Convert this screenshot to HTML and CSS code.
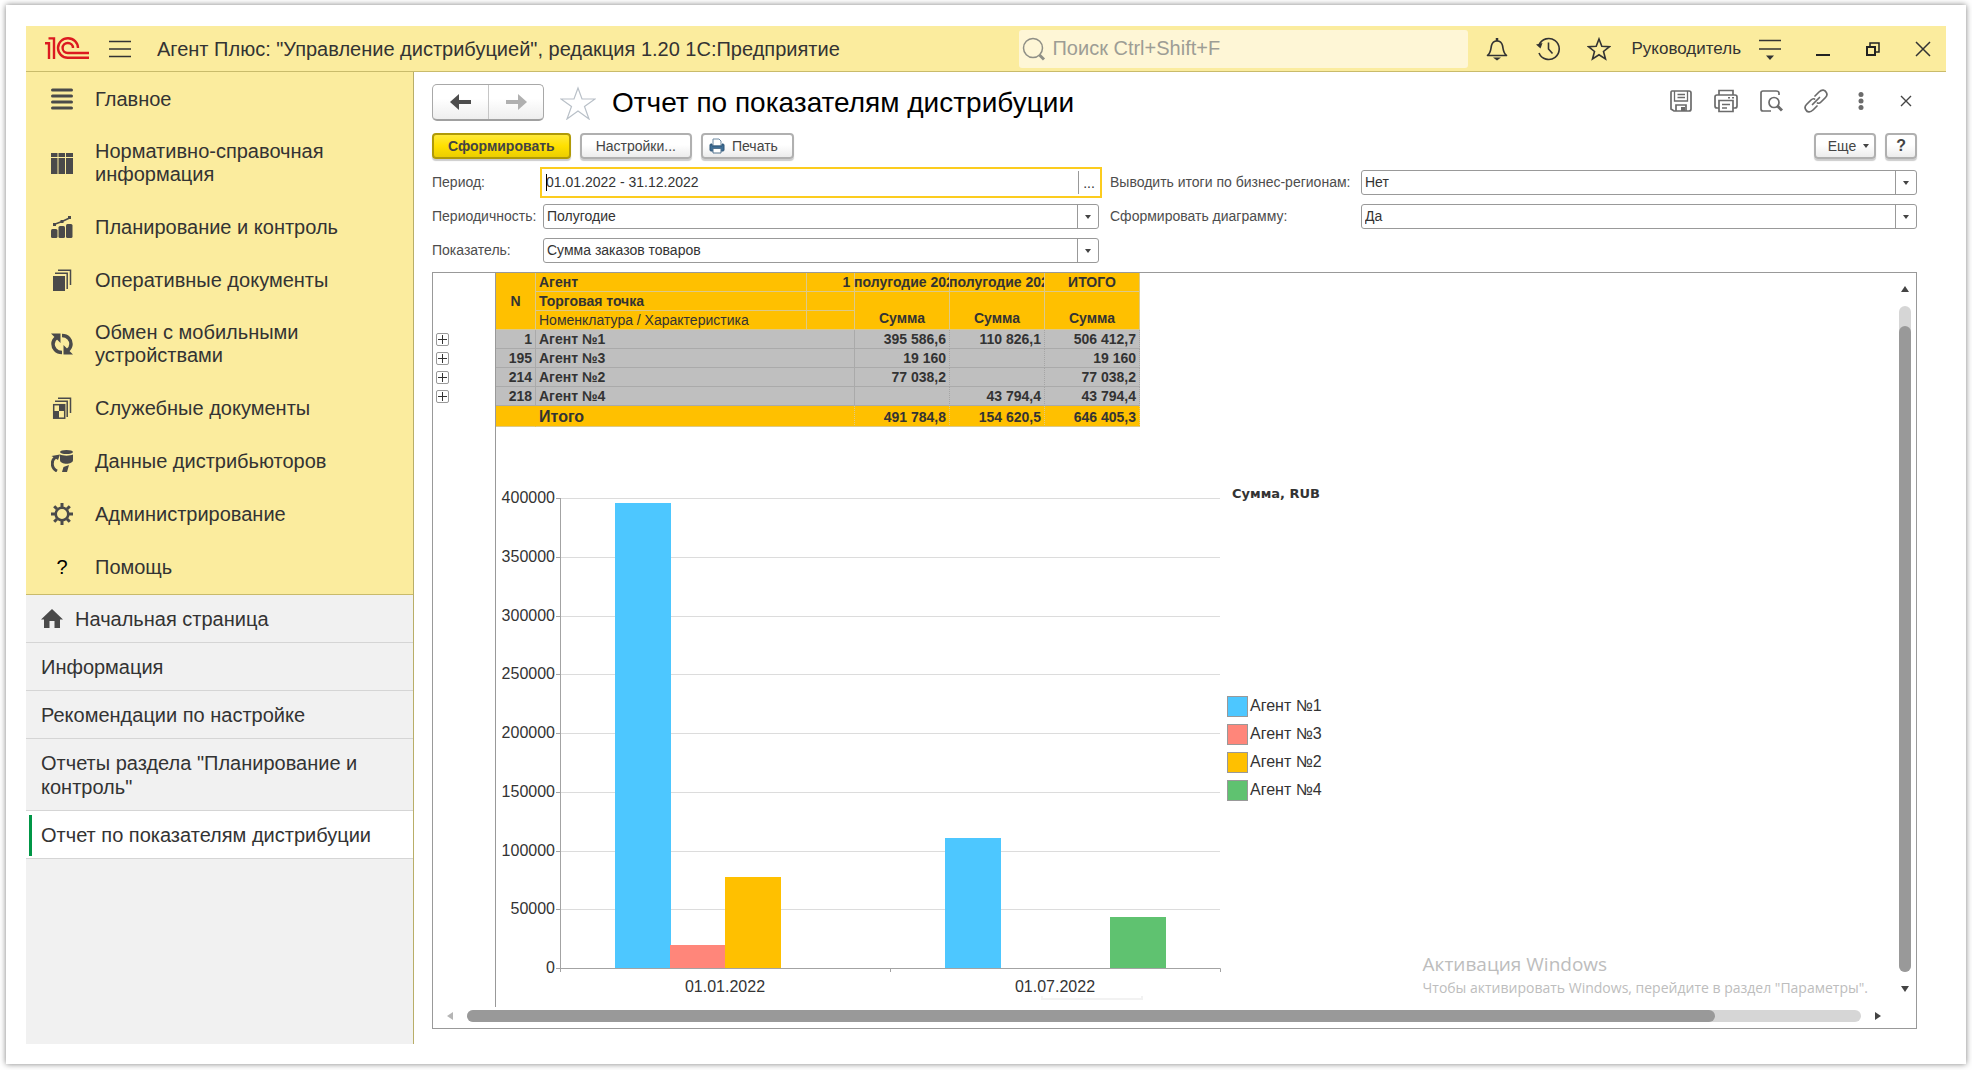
FILE: index.html
```html
<!DOCTYPE html>
<html lang="ru">

<head>
    <meta charset="UTF-8">
    <meta name="viewport" content="width=device-width, initial-scale=1.0">
    <title>Отчет по показателям дистрибуции</title>
    <link rel="stylesheet" href="styles.css">
</head>

<body>
    <div class="window">
        <header class="topbar">
            <svg class="logo" width="44" height="23" viewBox="0 0 44 23" fill="none" stroke="#dc1a20" stroke-width="2.4">
                <path d="M0 6.2H4V22M3.5 1.4H9V22" />
                <path d="M33 11A10 9.800 0 1 0 22.800 20.800H44" />
                <path d="M28 11A5.200 5 0 1 0 22.800 16H44" />
            </svg>
            <button class="icon-btn burger" aria-label="Меню">
                <svg width="22" height="20" viewBox="0 0 22 20" stroke="#333" stroke-width="1.500">
                    <path d="M0 2.500H22M0 10H22M0 17.500H22" />
                </svg>
            </button>
            <div class="app-name">Агент Плюс: "Управление дистрибуцией", редакция 1.20 1С:Предприятие</div>
            <label class="search">
                <svg width="24" height="24" viewBox="0 0 24 24" fill="none" stroke="#8f8f86">
                    <circle cx="11" cy="11" r="9.500" stroke-width="1.500" />
                    <path d="M17.500 18L22 22.500" stroke-width="3" />
                </svg>
                <input type="search" placeholder="Поиск Ctrl+Shift+F" aria-label="Поиск">
            </label>
            <div class="tools">
                <button class="icon-btn" aria-label="Уведомления">
                    <svg width="24" height="24" viewBox="0 0 24 24" fill="none" stroke="#333" stroke-width="1.600">
                        <path d="M2.500 18.500C6 16 5.500 13 6.500 8.500C7.200 5.500 9 4 12 4S16.800 5.500 17.500 8.500C18.500 13 18 16 21.500 18.500Z" stroke-linejoin="round" />
                        <path d="M12 1V4" stroke-width="2.500" />
                        <path d="M8 20.500H16L12 23.500Z" fill="#333" stroke="none" />
                    </svg>
                </button>
                <button class="icon-btn" aria-label="История">
                    <svg width="24" height="24" viewBox="0 0 24 24" fill="none" stroke="#333" stroke-width="1.600">
                        <path d="M3 8A10.500 10.500 0 1 1 3 16" />
                        <path d="M12.500 5.500V12L16.500 16.500" />
                        <path d="M0 7.500L6.500 6L4.500 11.500Z" fill="#333" stroke="none" />
                    </svg>
                </button>
                <button class="icon-btn" aria-label="Избранное">
                    <svg width="24" height="24" viewBox="0 0 24 24" fill="none" stroke="#333" stroke-width="1.600">
                        <path d="M12 2L14.800 9.200L22.500 9.600L16.500 14.500L18.500 22L12 17.800L5.500 22L7.500 14.500L1.500 9.600L9.200 9.200Z" />
                    </svg>
                </button>
            </div>
            <a href="#" class="user">Руководитель</a>
            <button class="icon-btn more-menu" aria-label="Сервис">
                <svg width="22" height="22" viewBox="0 0 22 22" stroke="#333" stroke-width="1.600">
                    <path d="M0 2.500H22M0 11H22" />
                    <path d="M7 17.500H15L11 22Z" fill="#333" stroke="none" />
                </svg>
            </button>
            <div class="window-buttons">
                <button class="icon-btn" aria-label="Свернуть">
                    <svg width="16" height="16" viewBox="0 0 16 16"><path d="M1 13H15V15H1Z" fill="#222" /></svg>
                </button>
                <button class="icon-btn" aria-label="Восстановить">
                    <svg width="16" height="16" viewBox="0 0 16 16" fill="none" stroke="#222" stroke-width="2">
                        <path d="M2 6H10V14H2Z" />
                        <path d="M5 5V2H14V11H11" stroke-width="1.500" />
                    </svg>
                </button>
                <button class="icon-btn" aria-label="Закрыть">
                    <svg width="16" height="16" viewBox="0 0 16 16" stroke="#333" stroke-width="1.500"><path d="M1 1L15 15M15 1L1 15" /></svg>
                </button>
            </div>
        </header>

        <div class="body">
            <aside class="sidebar">
                <nav class="sections">
                    <a href="#">
                        <svg width="22" height="22" viewBox="0 0 22 22" stroke="#4a4a4a" stroke-width="3" stroke-linecap="round">
                            <path d="M1.500 2H20.500M1.500 8H20.500M1.500 14H20.500M1.500 20H20.500" />
                        </svg>
                        <span>Главное</span>
                    </a>
                    <a href="#">
                        <svg width="22" height="22" viewBox="0 0 22 22" fill="#4a4a4a">
                            <path d="M0 1H6.500V5H0ZM7.500 1H14V5H7.500ZM15 1H22V5H15ZM0 6H6.500V22H0ZM7.500 6H14V22H7.500ZM15 6H22V22H15Z" />
                        </svg>
                        <span>Нормативно-справочная информация</span>
                    </a>
                    <a href="#">
                        <svg width="22" height="22" viewBox="0 0 22 22" fill="#4a4a4a">
                            <rect x="0" y="13" width="6.500" height="9" rx="1.500" />
                            <rect x="7.500" y="10" width="6.500" height="12" rx="1.500" />
                            <rect x="15" y="8" width="6.500" height="14" rx="1.500" />
                            <path d="M3 8.500L11 5.500L18.500 2" fill="none" stroke="#4a4a4a" stroke-width="1.500" />
                            <path d="M2 7H5V10H2ZM9.500 4H12.500V7H9.500ZM17 0H20V3H17Z" />
                        </svg>
                        <span>Планирование и контроль</span>
                    </a>
                    <a href="#">
                        <svg width="22" height="22" viewBox="0 0 22 22" fill="none" stroke="#4a4a4a" stroke-width="1.500">
                            <rect x="2" y="7" width="12" height="15" fill="#4a4a4a" stroke="none" />
                            <path d="M4 4.200H16.200V20M7 1.200H19.500V16" />
                        </svg>
                        <span>Оперативные документы</span>
                    </a>
                    <a href="#">
                        <svg width="22" height="22" viewBox="0 0 22 22" fill="none" stroke="#4a4a4a" stroke-width="3.500">
                            <path d="M11 19.500C5 19.500 2 15 2 11C2 8 3.500 6 5.500 4.500" />
                            <path d="M11 2.500C17 2.500 20 7 20 11C20 14 18.500 16 16.500 17.500" />
                            <path d="M0 0.500H9.500V10ZM22 21.500H12.500V12Z" fill="#4a4a4a" stroke="none" />
                        </svg>
                        <span>Обмен с мобильными устройствами</span>
                    </a>
                    <a href="#">
                        <svg width="22" height="22" viewBox="0 0 22 22" fill="none" stroke="#4a4a4a" stroke-width="1.500">
                            <rect x="2.700" y="7.700" width="11" height="13.500" />
                            <path d="M8 7H14V14H8ZM2 14H8V21H2Z" fill="#4a4a4a" stroke="none" />
                            <path d="M4 4.200H16.200V20M7 1.200H19.500V16" />
                        </svg>
                        <span>Служебные документы</span>
                    </a>
                    <a href="#">
                        <svg width="22" height="22" viewBox="0 0 22 22" fill="#4a4a4a">
                            <ellipse cx="15.500" cy="2" rx="6.500" ry="2" />
                            <path d="M9 4.500C12 6 19 6 22 4.500V10C22 15 9 15 9 10Z" />
                            <path d="M6 21C0 18 0 11 4.500 7" fill="none" stroke="#4a4a4a" stroke-width="3" />
                            <path d="M0.500 6L9 4.500L7 10ZM11 22L12.500 17L18 15L16 22Z" />
                        </svg>
                        <span>Данные дистрибьюторов</span>
                    </a>
                    <a href="#">
                        <svg width="22" height="22" viewBox="0 0 22 22" fill="none" stroke="#4a4a4a">
                            <circle cx="11" cy="11" r="6.300" stroke-width="2.600" />
                            <path d="M11 0V4M11 18V22M0 11H4M18 11H22M3.200 3.200L6 6M16 16L18.800 18.800M3.200 18.800L6 16M16 6L18.800 3.200" stroke-width="3" />
                        </svg>
                        <span>Администрирование</span>
                    </a>
                    <a href="#">
                        <b class="question">?</b>
                        <span>Помощь</span>
                    </a>
                </nav>
                <nav class="tabs">
                    <a href="#">
                        <svg width="22" height="20" viewBox="0 0 22 20" fill="#4a4a4a">
                            <path d="M11 0L22 10.500H19V19H13.500V12H8.500V19H3V10.500H0Z" />
                        </svg>
                        <span>Начальная страница</span>
                    </a>
                    <a href="#">Информация</a>
                    <a href="#">Рекомендации по настройке</a>
                    <a href="#">Отчеты раздела "Планирование и контроль"</a>
                    <a href="#" class="active">Отчет по показателям дистрибуции</a>
                </nav>
            </aside>

            <main class="content">
                <div class="title-row">
                    <div class="history">
                        <button aria-label="Назад">
                            <svg width="21" height="16" viewBox="0 0 21 16" fill="#4d4d4d"><path d="M0 8L9 0V6H21V10H9V16Z" /></svg>
                        </button>
                        <button aria-label="Вперед">
                            <svg width="21" height="16" viewBox="0 0 21 16" fill="#b0b0b0"><path d="M21 8L12 0V6H0V10H12V16Z" /></svg>
                        </button>
                    </div>
                    <button class="icon-btn" aria-label="В избранное">
                        <svg width="36" height="34" viewBox="0 0 36 34" fill="none" stroke="#b9c0c8" stroke-width="1.200">
                            <path d="M18 2L22 13H35L24.500 20.500L29 33L18 25L7 33L11.500 20.500L1 13H14Z" />
                        </svg>
                    </button>
                    <h1>Отчет по показателям дистрибуции</h1>
                    <div class="page-tools">
                        <button class="icon-btn" aria-label="Сохранить">
                            <svg width="24" height="24" viewBox="0 0 24 24" fill="none" stroke="#6b6b6b" stroke-width="1.700">
                                <path d="M3 2H20Q22 2 22 4V20Q22 22 20 22H5L2 20V4Q2 2 3 2Z" />
                                <path d="M5.500 2V12H18.500V2M8.500 5.500H16M8.500 8.500H16" stroke-width="1.300" />
                                <path d="M7 22V16H17V22" />
                                <path d="M12 18H16V22H12Z" fill="#6b6b6b" stroke="none" />
                            </svg>
                        </button>
                        <button class="icon-btn" aria-label="Печать">
                            <svg width="24" height="24" viewBox="0 0 24 24" fill="none" stroke="#6b6b6b" stroke-width="1.700">
                                <path d="M5 6V1.500H19V6" />
                                <path d="M5 19H3Q1 19 1 17V8Q1 6 3 6H21Q23 6 23 8V17Q23 19 21 19H19" />
                                <path d="M5 11.500H19V22.500H5Z" />
                                <path d="M8 15.500H16M8 19H13M14 8.800H16M18 8.800H20" stroke-width="1.400" />
                            </svg>
                        </button>
                        <button class="icon-btn" aria-label="Просмотр">
                            <svg width="24" height="24" viewBox="0 0 24 24" fill="none" stroke="#6b6b6b" stroke-width="1.700">
                                <path d="M12 22H4Q2 22 2 20V4Q2 2 4 2H17Q20 2 20 4V6" />
                                <circle cx="15" cy="13.500" r="5" />
                                <path d="M18.500 17L23 21.500" stroke-width="3" />
                            </svg>
                        </button>
                        <button class="icon-btn" aria-label="Ссылка">
                            <svg width="24" height="24" viewBox="0 0 24 24" fill="none" stroke="#6b6b6b" stroke-width="1.700" stroke-linecap="round">
                                <path d="M11 7L15 3C18 0 21 1 22 3C23.500 5 23 7 21.500 8.500L17 13C16 14 14.500 14.500 13.500 14" />
                                <path d="M13 17L9 21C6 24 3 23 2 21C0.500 19 1 17 2.500 15.500L7 11C8 10 9.500 9.500 10.500 10" />
                                <path d="M8.500 15.500L15.500 8.500" />
                            </svg>
                        </button>
                        <button class="icon-btn" aria-label="Еще">
                            <svg width="24" height="24" viewBox="0 0 24 24" fill="#6b6b6b">
                                <circle cx="12" cy="5.500" r="2.500" /><circle cx="12" cy="12" r="2.500" /><circle cx="12" cy="18.500" r="2.500" />
                            </svg>
                        </button>
                        <button class="icon-btn" aria-label="Закрыть">
                            <svg width="24" height="24" viewBox="0 0 24 24" stroke="#444" stroke-width="1.400"><path d="M7 7L17 17M17 7L7 17" /></svg>
                        </button>
                    </div>
                </div>

                <div class="actions">
                    <button class="btn primary">Сформировать</button>
                    <button class="btn">Настройки...</button>
                    <button class="btn">
                        <svg width="16" height="16" viewBox="0 0 16 16">
                            <path d="M4 1H10L12 3V8H4Z" fill="#fff" stroke="#6f8ba3" />
                            <path d="M1 7Q1 6 2 6H3V8H13V6H14Q15 6 15 7V12Q15 13 14 13H2Q1 13 1 12Z" fill="#3f6f97" stroke="#2d5576" />
                            <path d="M4 10.500H12V15H4Z" fill="#fff" stroke="#54748f" />
                        </svg>
                        Печать
                    </button>
                    <button class="btn more">Еще <i class="arrow down"></i></button>
                    <button class="btn help">?</button>
                </div>

                <form class="filters">
                    <label for="period">Период:</label>
                    <div class="field focused">
                        <input type="text" id="period" value="01.01.2022 - 31.12.2022">
                        <button type="button" class="pick" aria-label="Выбрать период">...</button>
                    </div>
                    <label for="totals" class="second">Выводить итоги по бизнес-регионам:</label>
                    <div class="field">
                        <select id="totals"><option>Нет</option><option>Да</option></select>
                        <span class="pick"><i class="arrow down"></i></span>
                    </div>
                    <label for="frequency">Периодичность:</label>
                    <div class="field">
                        <select id="frequency"><option>Полугодие</option></select>
                        <span class="pick"><i class="arrow down"></i></span>
                    </div>
                    <label for="diagram" class="second">Сформировать диаграмму:</label>
                    <div class="field">
                        <select id="diagram"><option>Да</option><option>Нет</option></select>
                        <span class="pick"><i class="arrow down"></i></span>
                    </div>
                    <label for="measure">Показатель:</label>
                    <div class="field">
                        <select id="measure"><option>Сумма заказов товаров</option></select>
                        <span class="pick"><i class="arrow down"></i></span>
                    </div>
                </form>

                <section class="report">
                    <div class="groups">
                        <button aria-label="Развернуть"></button>
                        <button aria-label="Развернуть"></button>
                        <button aria-label="Развернуть"></button>
                        <button aria-label="Развернуть"></button>
                    </div>
                    <div class="sheet">
                        <table>
                            <colgroup>
                                <col class="c-n"><col class="c-name"><col class="c-gap"><col class="c-sum"><col class="c-sum"><col class="c-sum">
                            </colgroup>
                            <thead>
                                <tr>
                                    <th rowspan="3">N</th>
                                    <th class="left">Агент</th>
                                    <th></th>
                                    <th><div class="half first">1 полугодие 2022</div></th>
                                    <th><div class="half">2 полугодие 2022</div></th>
                                    <th>ИТОГО</th>
                                </tr>
                                <tr>
                                    <th class="left">Торговая точка</th>
                                    <th></th>
                                    <th rowspan="2" class="sum">Сумма</th>
                                    <th rowspan="2" class="sum">Сумма</th>
                                    <th rowspan="2" class="sum">Сумма</th>
                                </tr>
                                <tr>
                                    <th class="left light">Номенклатура / Характеристика</th>
                                    <th></th>
                                </tr>
                            </thead>
                            <tbody>
                                <tr><td>1</td><td colspan="2" class="left">Агент №1</td><td>395 586,6</td><td>110 826,1</td><td>506 412,7</td></tr>
                                <tr><td>195</td><td colspan="2" class="left">Агент №3</td><td>19 160</td><td></td><td>19 160</td></tr>
                                <tr><td>214</td><td colspan="2" class="left">Агент №2</td><td>77 038,2</td><td></td><td>77 038,2</td></tr>
                                <tr><td>218</td><td colspan="2" class="left">Агент №4</td><td></td><td>43 794,4</td><td>43 794,4</td></tr>
                            </tbody>
                            <tfoot>
                                <tr><td></td><td colspan="2" class="left total">Итого</td><td>491 784,8</td><td>154 620,5</td><td>646 405,3</td></tr>
                            </tfoot>
                        </table>

                        <div class="chart">
                            <svg class="plot" width="726" height="579" viewBox="0 0 726 579">
                                <path class="grid" d="M65 71.500H724M65 130.500H724M65 189.500H724M65 247.500H724M65 306.500H724M65 365.500H724M65 424.500H724M65 482.500H724" />
                                <g class="y-labels">
                                    <text x="59" y="76">400000</text>
                                    <text x="59" y="135">350000</text>
                                    <text x="59" y="194">300000</text>
                                    <text x="59" y="252">250000</text>
                                    <text x="59" y="311">200000</text>
                                    <text x="59" y="370">150000</text>
                                    <text x="59" y="429">100000</text>
                                    <text x="59" y="487">50000</text>
                                    <text x="59" y="546">0</text>
                                </g>
                                <rect class="agent1" x="119" y="76" width="56" height="465" />
                                <rect class="agent3" x="174" y="518" width="55" height="23" />
                                <rect class="agent2" x="229" y="450" width="56" height="91" />
                                <rect class="agent1" x="449" y="411" width="56" height="130" />
                                <rect class="agent4" x="614" y="490" width="56" height="51" />
                                <path class="axis" d="M64.500 71V545M60 541.500H724.500V545M394.500 541V545M60 71.500H64M60 130.500H64M60 189.500H64M60 247.500H64M60 306.500H64M60 365.500H64M60 424.500H64M60 482.500H64" />
                                <g class="x-labels">
                                    <text x="229" y="565">01.01.2022</text>
                                    <text x="559" y="565">01.07.2022</text>
                                </g>
                            </svg>
                            <div class="legend">
                                <h2>Сумма, RUB</h2>
                                <ul>
                                    <li><i class="agent1"></i>Агент №1</li>
                                    <li><i class="agent3"></i>Агент №3</li>
                                    <li><i class="agent2"></i>Агент №2</li>
                                    <li><i class="agent4"></i>Агент №4</li>
                                </ul>
                            </div>
                        </div>
                        <div class="ghost"></div>
                        <div class="activation">
                            <p class="big">Активация Windows</p>
                            <p>Чтобы активировать Windows, перейдите в раздел "Параметры".</p>
                        </div>
                    </div>
                    <div class="scroll vertical">
                        <i class="arrow up"></i>
                        <div class="track"><div class="thumb"></div></div>
                        <i class="arrow down"></i>
                    </div>
                    <div class="scroll horizontal">
                        <i class="arrow to-left"></i>
                        <div class="track"><div class="thumb"></div></div>
                        <i class="arrow to-right"></i>
                    </div>
                </section>
            </main>
        </div>
    </div>
</body>

</html>
```

FILE: styles.css
```css
* {
    margin: 0;
    padding: 0;
    box-sizing: border-box;
}

body {
    min-height: 100vh;
    display: flex;
    padding: 5px 6px 6px;
    background: #fff;
    color: #333;
    font: 14px/18px "Liberation Sans", Arial, sans-serif;
}

ul {
    list-style: none;
}

a {
    color: #333;
    text-decoration: none;
}

svg {
    display: block;
    flex: none;
}

button,
input,
select {
    font: inherit;
    color: inherit;
    border: 0;
    outline: 0;
    background: none;
}

.window {
    flex: 1;
    min-width: 0;
    display: flex;
    flex-direction: column;
    padding: 21px 20px 20px;
    background: #fff;
    box-shadow: 0 0 6px rgba(0, 0, 0, 0.5);
}

/* верхняя панель */
.topbar {
    display: flex;
    align-items: center;
    height: 46px;
    padding: 0 15px 0 19px;
    background: #fbec9e;
    border-bottom: 1px solid #c9bb6b;
}

.burger {
    margin: 0 26px 0 20px;
}

.app-name {
    flex: 1;
    white-space: nowrap;
    font-size: 20px;
    line-height: 24px;
}

.search {
    display: flex;
    align-items: center;
    gap: 6px;
    width: 449px;
    height: 38px;
    padding: 0 3px;
    background: #fef6d6;
    border-radius: 3px;
}

.search input {
    flex: 1;
    min-width: 0;
    font-size: 20px;
}

.search input::placeholder {
    color: #9d9d95;
}

.tools {
    display: flex;
    gap: 27px;
    margin: 0 20px 0 17px;
}

.user {
    font-size: 17px;
}

.more-menu {
    margin: 0 34px 0 18px;
}

.window-buttons {
    display: flex;
    gap: 34px;
}

.body {
    flex: 1;
    display: flex;
}

/* левая панель */
.sidebar {
    width: 388px;
    flex: none;
    background: #f1f1f1;
    border-right: 1px solid #b9ae68;
    font-size: 20px;
}

.sections {
    padding-top: 1px;
    background: #fbec9e;
    border-bottom: 1px solid #c9bb6b;
}

.sections a {
    display: flex;
    align-items: center;
    gap: 22px;
    min-height: 53px;
    padding: 14px 60px 15px 25px;
    line-height: 23px;
}

.question {
    width: 22px;
    text-align: center;
    font-weight: normal;
    color: #000;
}

.tabs a {
    display: flex;
    align-items: center;
    gap: 12px;
    padding: 12px 15px 11px;
    line-height: 24px;
    border-bottom: 1px solid #d5d5d5;
}

.tabs .active {
    gap: 15px;
    padding-left: 9px;
    background: #fff;
}

.tabs .active::before {
    content: "";
    width: 3px;
    height: 41px;
    margin: -9px -6px;
    background: #009646;
}

/* форма отчета */
.content {
    flex: 1;
    min-width: 0;
    display: flex;
    flex-direction: column;
    padding: 12px 29px 15px 18px;
}

.title-row {
    display: flex;
    align-items: center;
    gap: 16px;
    height: 37px;
}

.history {
    display: flex;
    border: 1px solid #a8a8a8;
    border-bottom: 2px solid #a0a0a0;
    border-radius: 5px;
    background: linear-gradient(#fff 40%, #eee);
}

.history button {
    display: flex;
    align-items: center;
    justify-content: center;
    width: 55px;
    height: 34px;
}

.history button + button {
    border-left: 1px solid #c6c6c6;
}

h1 {
    flex: 1;
    font-size: 28px;
    line-height: 32px;
    font-weight: normal;
    color: #000;
}

.page-tools {
    display: flex;
    gap: 21px;
    margin-right: -1px;
    padding-bottom: 3px;
}

.actions {
    display: flex;
    gap: 9px;
    margin-top: 12px;
}

.btn {
    display: flex;
    align-items: center;
    gap: 7px;
    height: 26px;
    padding: 0 14px;
    border: 2px solid #b0b0b0;
    border-radius: 4px;
    background: linear-gradient(#fff 45%, #ececec);
    box-shadow: 0 2px 1px #ccc;
    color: #444;
}

.btn svg {
    margin-left: -8px;
}

.primary {
    font-weight: bold;
    border-color: #b09a08;
    background: linear-gradient(#ffe93a, #ffe000 50%, #ecce00);
}

.more {
    margin-left: auto;
    padding: 0 5px 0 12px;
}

.help {
    padding: 0 9px;
    font-size: 16px;
    font-weight: bold;
}

.arrow {
    border: 3px solid transparent;
}

.arrow.down {
    border-top: 4px solid #444;
    border-bottom: 0;
}

.arrow.up {
    border-width: 0 4px 6px;
    border-bottom-color: #444;
}

.arrow.to-left {
    border-width: 4px 6px 4px 0;
    border-right-color: #b5b5b5;
}

.arrow.to-right {
    border-width: 4px 0 4px 6px;
    border-left-color: #444;
}

.filters {
    display: grid;
    grid-template-columns: 111px 1fr 262px 1fr;
    grid-auto-rows: 25px;
    row-gap: 9px;
    align-items: center;
    margin-top: 11px;
    white-space: nowrap;
    color: #4d4d4d;
}

.filters label {
    padding-bottom: 2px;
}

.second {
    padding-left: 11px;
}

.field {
    display: flex;
    height: 25px;
    border: 1px solid #999;
    border-radius: 3px;
    background: #fff;
    color: #333;
}

.field input,
.field select {
    flex: 1;
    min-width: 0;
    padding: 0 0 2px 3px;
    appearance: none;
}

.field.focused {
    position: relative;
    height: 31px;
    margin: -3px;
    padding: 2px 1px;
    border: 2px solid #fccc1e;
    border-radius: 0;
}

/* текстовый курсор */
.focused::before {
    content: "";
    position: absolute;
    left: 4px;
    top: 5px;
    width: 1px;
    height: 17px;
    background: #000;
}

.pick {
    display: flex;
    align-items: center;
    justify-content: center;
    width: 21px;
    border-left: 1px solid #999;
    pointer-events: none;
}

/* табличный документ */
.report {
    flex: 1;
    display: grid;
    grid-template: 1fr 21px / 63px 1fr 22px;
    margin-top: 9px;
    border: 1px solid #999;
}

.groups {
    display: flex;
    flex-direction: column;
    gap: 6px;
    padding: 60px 0 0 3px;
    border-right: 1px solid #999;
}

.groups button {
    width: 13px;
    height: 13px;
    border: 1px solid #999;
    border-radius: 2px;
    background:
        linear-gradient(#333, #333) center / 9px 1px no-repeat,
        linear-gradient(#333, #333) center / 1px 9px no-repeat;
}

.sheet {
    position: relative;
    min-width: 0;
}

table {
    width: 644px;
    table-layout: fixed;
    border-spacing: 0;
    line-height: 16px;
    font-weight: bold;
}

.c-n {
    width: 40px;
}

.c-name {
    width: 271px;
}

.c-gap {
    width: 48px;
}

.c-sum {
    width: 95px;
}

th,
td {
    height: 19px;
    padding: 0 3px;
    border-right: 1px solid #dcc98a;
    border-bottom: 1px solid #dcc98a;
    white-space: nowrap;
}

th,
tfoot td {
    background: #ffc000;
}

td {
    text-align: right;
}

tbody td {
    background: #bfbfbf;
    border-color: #aaa;
}

tbody td + td + td {
    border-right: 1px dotted #a5a5a5;
}

tfoot td {
    height: 21px;
    padding-top: 2px;
    border-right-style: dotted;
}

tfoot td:first-child {
    border-right-color: #ffc000;
}

.left {
    text-align: left;
}

.light {
    font-weight: normal;
}

.sum {
    vertical-align: bottom;
    padding-bottom: 3px;
}

.total {
    font-size: 16px;
}

/* длинный заголовок обрезается по границе колонки */
.half {
    display: flex;
    justify-content: center;
    margin: 0 -3px;
    clip-path: inset(0);
}

.half.first {
    clip-path: inset(0 0 0 -30px);
}

.chart {
    display: flex;
}

.plot {
    fill: #333;
    font-size: 16px;
}

.grid {
    stroke: #dcdcdc;
}

.axis {
    fill: none;
    stroke: #a3a3a3;
}

.y-labels {
    text-anchor: end;
}

.x-labels {
    text-anchor: middle;
}

.agent1 {
    fill: #4dc7ff;
    background: #4dc7ff;
}

.agent2 {
    fill: #ffc000;
    background: #ffc000;
}

.agent3 {
    fill: #ff867a;
    background: #ff867a;
}

.agent4 {
    fill: #5fc270;
    background: #5fc270;
}

.legend {
    padding: 58px 0 0 5px;
    font-size: 16px;
}

.legend h2 {
    padding-left: 5px;
    font: bold 13px/18px "DejaVu Sans", Verdana, sans-serif;
}

.legend ul {
    margin-top: 189px;
}

.legend li {
    display: flex;
    align-items: center;
    gap: 2px;
    height: 28px;
}

.legend i {
    width: 21px;
    height: 21px;
    border: 1px solid #999;
}

/* край всплывающей подсказки */
.ghost {
    position: absolute;
    left: 545px;
    bottom: 7px;
    width: 102px;
    height: 4px;
    border: 2px solid #f2f2f2;
    border-top: 0;
}

.activation {
    position: absolute;
    right: 26px;
    bottom: 8px;
    color: #bdbdbd;
    font: 14px/22px "Open Sans", "Noto Sans", sans-serif;
}

.activation .big {
    font-size: 19px;
    line-height: 26px;
}

.scroll {
    display: flex;
    align-items: center;
}

.vertical {
    flex-direction: column;
    padding: 13px 0 15px;
    gap: 14px;
}

.vertical .arrow.down {
    border-width: 6px 4px 0;
}

.track {
    flex: 1;
    display: flex;
    background: #d6d6d6;
    border-radius: 6px;
}

.vertical .track {
    width: 12px;
    align-items: flex-end;
}

.thumb {
    background: #999;
    border-radius: 6px;
}

.vertical .thumb {
    width: 100%;
    height: 97%;
}

.horizontal {
    grid-column: 1 / 4;
    align-items: flex-start;
    gap: 14px;
    padding: 3px 35px 0 14px;
}

.horizontal .arrow {
    margin-top: 2px;
}

.horizontal .track {
    height: 12px;
}

.horizontal .thumb {
    width: 89.5%;
    height: 100%;
}
```
